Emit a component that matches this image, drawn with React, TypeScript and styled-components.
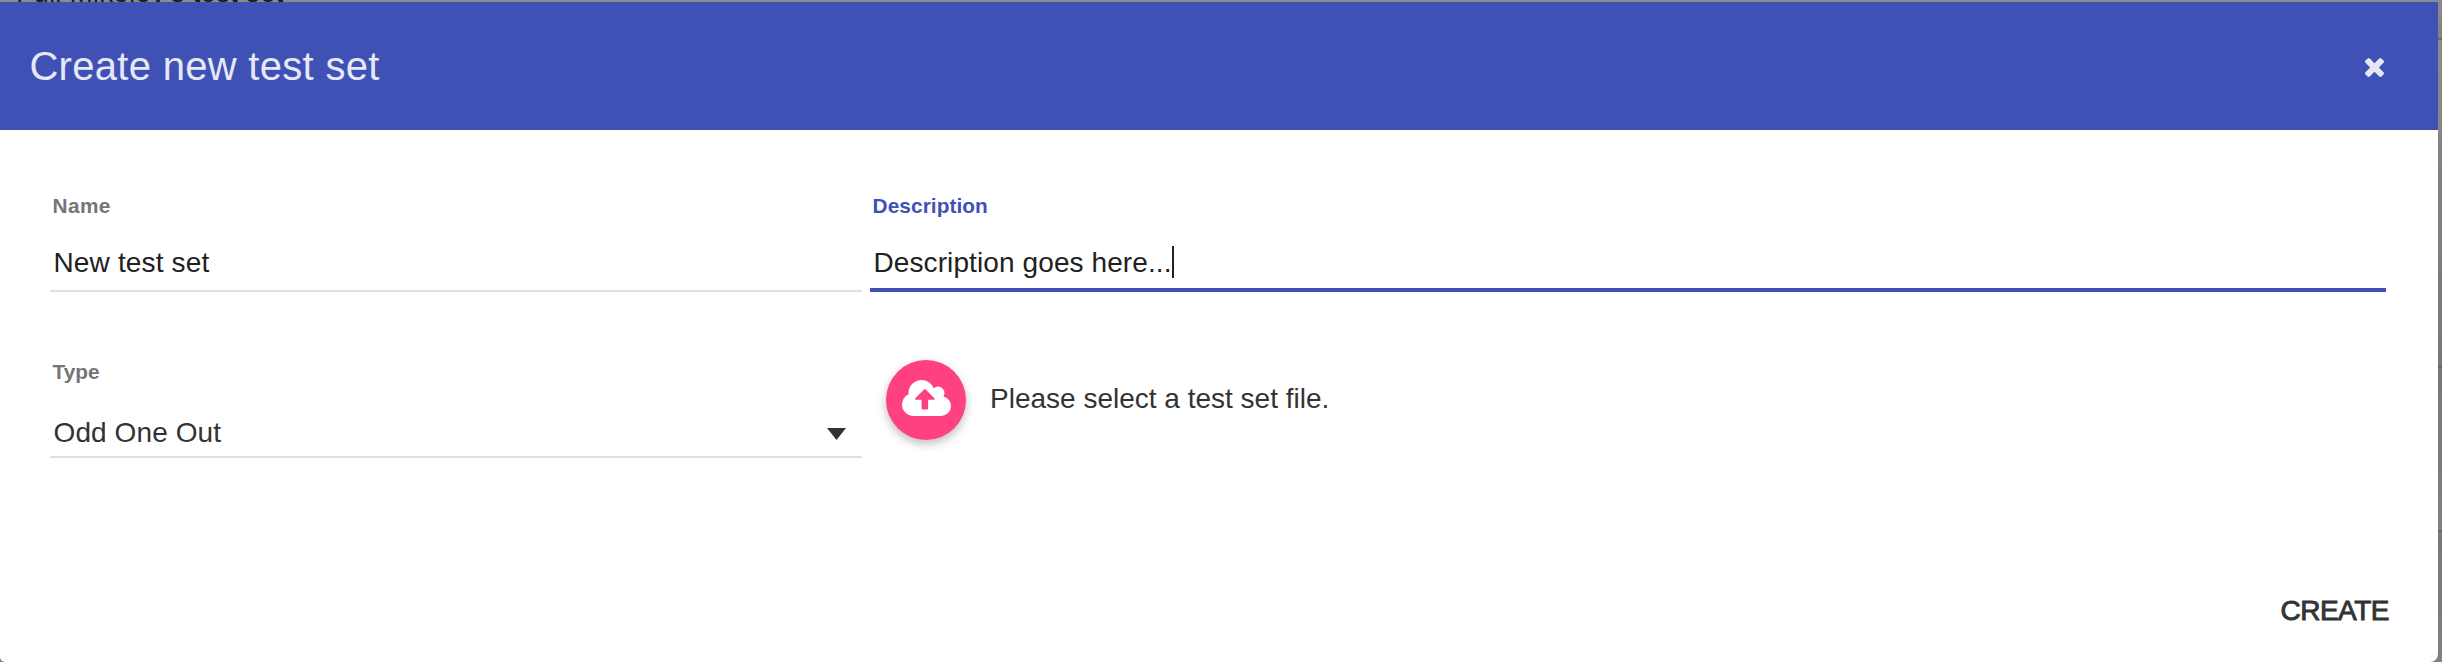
import React from "react";
import styled, { createGlobalStyle } from "styled-components";

const Global = createGlobalStyle`
  * { box-sizing: border-box; }
  body { margin: 0; background: #808080; overflow: hidden; font-family: "Liberation Sans", Helvetica, Arial, sans-serif; color: #333; }
`;
const Page = styled.div`
  width: 2442px; height: 662px; display: grid; grid-template-columns: 2438px 4px; grid-template-rows: 2px 660px; overflow: hidden;
`;
const Behind = styled.div`
  grid-column: 1; grid-row: 1; background: #8c8c8c; overflow: hidden; color: #1c1c1c;
  display: flex; align-items: flex-end; padding-left: 16px; font-size: 28px; line-height: 32px; white-space: nowrap;
`;
const BehindText = styled.span`margin-bottom: -7px; letter-spacing: 0.1px;`;
const Edge = styled.div`
  grid-column: 2; grid-row: 1 / 3; display: grid; grid-template-rows: 40px 328px 164px 130px;
`;
const EdgePart = styled.div<{ $from: string; $to: string }>`
  border-bottom: 2px solid #686868; background: linear-gradient(${p => p.$from}, ${p => p.$to});
  &:last-child { border-bottom: 0; }
`;
const Dialog = styled.section`
  grid-column: 1; grid-row: 2; background: #fff; border-radius: 0 0 8px 5px; display: flex; flex-direction: column;
`;
const Header = styled.header`
  height: 128px; flex: none; background: #3f51b5; color: #e6e8f6; display: flex; align-items: center; justify-content: space-between; padding: 2px 54px 0 29.4px;
`;
const Title = styled.h1`margin: 0 0 2px; font-size: 40px; line-height: 46px; font-weight: 400; letter-spacing: 0.3px;`;
const Close = styled.button`border: 0; padding: 0; background: none; color: inherit; display: flex; svg { display: block; }`;
const Form = styled.div`
  display: grid; grid-template-columns: 812px 1516px; column-gap: 8px; grid-template-rows: 166px 150px; padding: 62px 50px 0;
`;
const Field = styled.label`display: flex; flex-direction: column;`;
const Label = styled.span<{ $active?: boolean; $track?: number }>`
  font-size: 20.8px; line-height: 28px; font-weight: 700; padding-left: 2.6px; letter-spacing: ${p => p.$track ?? 0}px;
  color: ${p => (p.$active ? "#3f51b5" : "#757575")};
`;
const Value = styled.span<{ $active?: boolean; $select?: boolean }>`
  height: 72px; padding: ${p => (p.$select ? 31 : 27)}px 16px 0 3.5px; display: flex; align-items: flex-start;
  font-size: 28px; line-height: 32px; color: ${p => (p.$select ? "#333" : "#212121")};
  border-bottom: ${p => (p.$active ? "4px solid #3f51b5" : "2px solid #e0e0e0")};
`;
const Words = styled.span<{ $track?: number }>`letter-spacing: ${p => p.$track ?? 0}px; white-space: nowrap;`;
const Caret = styled.i`width: 2px; height: 32px; margin-top: -1px; background: #212121;`;
const Arrow = styled.svg`margin: 11px 0 0 auto; display: block;`;
const Upload = styled.div`
  display: flex; align-items: center; height: 80px; padding-left: 16px; margin-top: 2px; gap: 24px; font-size: 28px; line-height: 32px;
  > span { padding-bottom: 2px; }
`;
const Round = styled.button`
  width: 80px; height: 80px; border: 0; padding: 0 0 4px; border-radius: 50%; background: #ff4081; color: #fff; display: flex; align-items: center; justify-content: center;
  box-shadow: 0 4px 10px rgba(0,0,0,.26);
`;
const Footer = styled.footer`margin-top: auto; display: flex; justify-content: flex-end; padding: 0 49px 35px;`;
const Create = styled.button`
  border: 0; padding: 0; background: none; font: 400 28px/32px "Liberation Sans", Arial, sans-serif; color: #333;
  letter-spacing: -0.5px; -webkit-text-stroke: 0.9px #333;
`;

export default function App() {
  return (
    <>
      <Global />
      <Page>
        <Behind><BehindText>Full Mikolov's test set</BehindText></Behind>
        <Edge>
          <EdgePart $from="#8c8c8c" $to="#808080" />
          <EdgePart $from="#8a8a8a" $to="#787878" />
          <EdgePart $from="#787878" $to="#808080" />
          <EdgePart $from="#787878" $to="#808080" />
        </Edge>
        <Dialog>
          <Header>
            <Title>Create new test set</Title>
            <Close aria-label="Close">
              <svg width="19" height="19" viewBox="110 366 1188 1188" fill="currentColor"><path d="M1298 1322q0 40-28 68l-136 136q-28 28-68 28t-68-28l-294-294-294 294q-28 28-68 28t-68-28l-136-136q-28-28-28-68t28-68l294-294-294-294q-28-28-28-68t28-68l136-136q28-28 68-28t68 28l294 294 294-294q28-28 68-28t68 28l136 136q28 28 28 68t-28 68l-294 294 294 294q28 28 28 68z" /></svg>
            </Close>
          </Header>
          <Form>
            <Field><Label $track={0.4}>Name</Label><Value><Words $track={0.15}>New test set</Words></Value></Field>
            <Field><Label $active $track={0.08}>Description</Label><Value $active><Words $track={0.1}>Description goes here...</Words><Caret /></Value></Field>
            <Field><Label>Type</Label><Value $select><Words $track={0.1}>Odd One Out</Words><Arrow width="19" height="12" viewBox="0 0 19 12"><path d="M0 0h19L9.500 12z" fill="#333" /></Arrow></Value></Field>
            <Upload>
              <Round aria-label="Upload">
                <svg width="49" height="36" viewBox="0 0 1920 1408" fill="currentColor"><path d="M1280 736q0-14-9-23l-352-352q-9-9-23-9t-23 9l-351 351q-10 12-10 24 0 14 9 23t23 9h224v352q0 13 9.500 22.500t22.500 9.500h192q13 0 22.500-9.500t9.500-22.500v-352h224q13 0 22.500-9.500t9.500-22.500zM1920 1024q0 159-112.500 271.500t-271.500 112.500h-1088q-185 0-316.500-131.500t-131.500-316.500q0-130 70-240t188-165q-2-30-2-43 0-212 150-362t362-150q156 0 285.500 87t188.500 231q71-62 166-62 106 0 181 75t75 181q0 76-41 138 130 31 213.500 135.500t83.500 238.500z" /></svg>
              </Round>
              <Words>Please select a test set file.</Words>
            </Upload>
          </Form>
          <Footer><Create>CREATE</Create></Footer>
        </Dialog>
      </Page>
    </>
  );
}
